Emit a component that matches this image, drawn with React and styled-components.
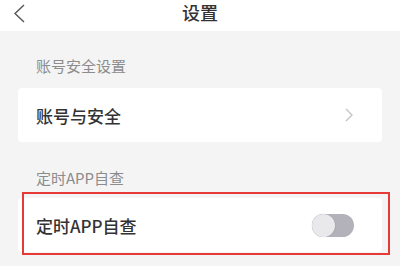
import styled, { createGlobalStyle } from "styled-components";

const Global = createGlobalStyle`
  body {
    margin: 0;
    background: #f4f4f4;
    font-family: "Noto Sans CJK SC", "Noto Sans", sans-serif;
  }
`;

const Page = styled.div`
  width: 400px;
  height: 266px;
  overflow: hidden;
  background: #f4f4f4;
`;

const Header = styled.header`
  height: 31px;
  background: #fff;
  display: grid;
  grid-template-columns: 60px 1fr 60px;
  align-items: center;
`;

const Back = styled.div`
  display: flex;
  align-items: center;
  padding-left: 12px;
  margin-top: -5px;
`;

const Title = styled.h1`
  margin: -7px 0 0;
  text-align: center;
  font-size: 18px;
  font-weight: 500;
  color: #333;
`;

const Body = styled.main`
  display: flex;
  flex-direction: column;
  padding: 0 18px;
`;

const SectionLabel = styled.div`
  padding-left: 18px;
  margin-top: ${(p) => p.$top}px;
  margin-bottom: ${(p) => p.$bottom}px;
  font-size: 15px;
  line-height: 16px;
  color: #8c8c8c;
`;

const Card = styled.div`
  position: relative;
  height: 54px;
  background: #fff;
  border-radius: 4px;
  display: flex;
  align-items: center;
  justify-content: space-between;
  padding: 0 ${(p) => p.$right}px 0 18px;
`;

const ItemText = styled.span`
  font-size: 17px;
  font-weight: 500;
  color: #333;
`;

const Toggle = styled.div`
  width: 42px;
  height: 23px;
  border-radius: 12px;
  background: #b3b2ba;
  position: relative;
`;

const Knob = styled.div`
  position: absolute;
  left: 0;
  top: 0;
  width: 23px;
  height: 23px;
  border-radius: 50%;
  background: #e9e9eb;
  box-shadow: 0 0 1px rgba(0, 0, 0, 0.25);
`;

const Highlight = styled.div`
  position: absolute;
  left: 4px;
  top: -6px;
  right: -8px;
  bottom: -3px;
  border: 2px solid #e53a35;
  pointer-events: none;
`;

export default function App() {
  return (
    <Page>
      <Global />
      <Header>
        <Back>
          <svg width="14" height="19" viewBox="0 0 14 19">
            <path d="M12 1 L3 9.5 L12 18" fill="none" stroke="#555" strokeWidth="1.4" />
          </svg>
        </Back>
        <Title>设置</Title>
        <div />
      </Header>
      <Body>
        <SectionLabel $top={27} $bottom={14}>账号安全设置</SectionLabel>
        <Card $right={28}>
          <ItemText>账号与安全</ItemText>
          <svg width="10" height="14" viewBox="0 0 10 14">
            <path d="M2 1 L8 7 L2 13" fill="none" stroke="#c4c4c4" strokeWidth="1.4" />
          </svg>
        </Card>
        <SectionLabel $top={28} $bottom={12}>定时APP自查</SectionLabel>
        <Card $right={28}>
          <ItemText>定时APP自查</ItemText>
          <Toggle>
            <Knob />
          </Toggle>
          <Highlight />
        </Card>
      </Body>
    </Page>
  );
}
